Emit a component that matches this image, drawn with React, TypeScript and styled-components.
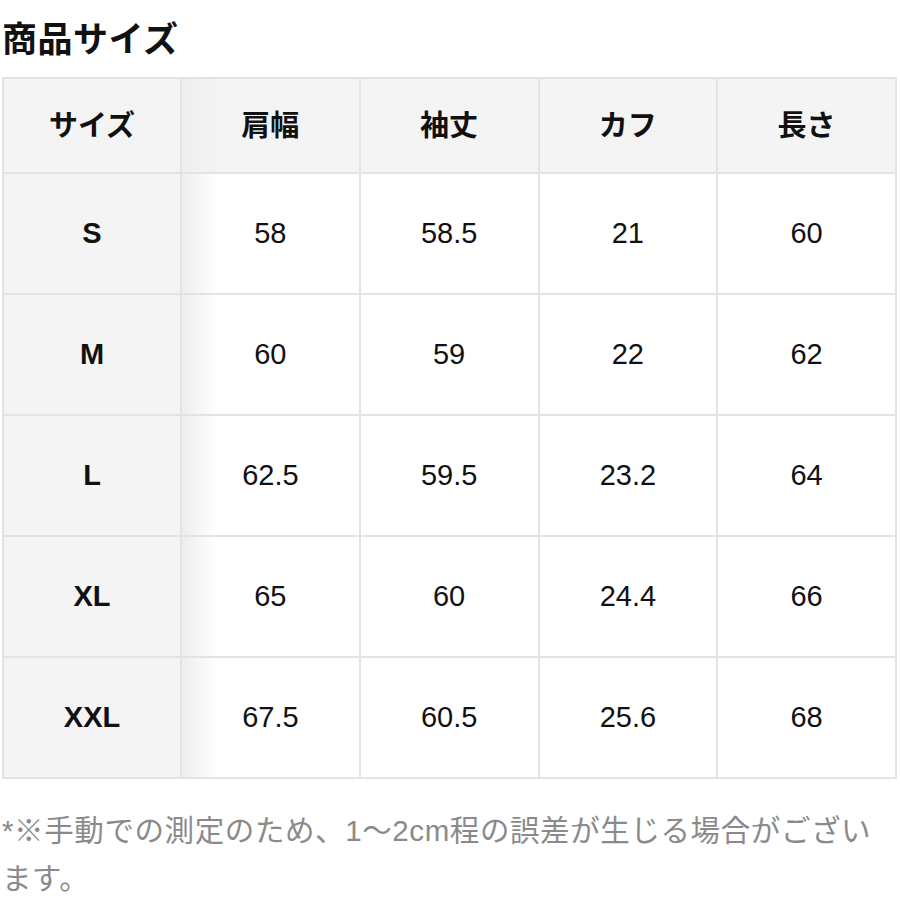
import React from "react";
import styled, { createGlobalStyle } from "styled-components";

const Global = createGlobalStyle`
  html, body { margin: 0; padding: 0; background: #fff; }
  body { font-family: "Liberation Sans", "Noto Sans CJK JP", sans-serif; }
`;

const Page = styled.div`
  width: 900px;
  padding: 0 3px 0 2px;
  box-sizing: border-box;
`;

const Title = styled.h1`
  margin: 0;
  height: 77px;
  display: flex;
  align-items: center;
  padding-bottom: 4px;
  box-sizing: border-box;
  font-family: "Noto Sans CJK JP", sans-serif;
  font-weight: 700;
  font-size: 35px;
  color: #111;
  letter-spacing: 0.5px;
`;

const Table = styled.div`
  display: grid;
  grid-template-columns: 176px repeat(4, 1fr);
  grid-template-rows: 93px repeat(5, 119px);
  gap: 2px;
  padding: 2px;
  background: #e3e3e3;
  width: 895px;
  box-sizing: border-box;
`;

const Cell = styled.div<{ $head?: boolean; $shade?: boolean }>`
  display: flex;
  align-items: center;
  justify-content: center;
  font-size: 29px;
  color: #111;
  font-weight: ${(p) => (p.$head ? 700 : 400)};
  background: ${(p) =>
    p.$shade
      ? `linear-gradient(to right, #eeeeee 0px, ${p.$head ? "#f4f4f4" : "#fff"} 36px)`
      : p.$head
      ? "#f4f4f4"
      : "#fff"};
`;

const HeadText = styled.span`
  font-family: "Noto Sans CJK JP", sans-serif;
  font-weight: 700;
  font-size: 29px;
  margin-top: -5px;
`;

const Note = styled.p`
  margin: 28px 0 0;
  font-family: "Liberation Sans", "Noto Sans CJK JP", sans-serif;
  font-size: 29.5px;
  letter-spacing: 0.6px;
  line-height: 48px;
  color: #8a8a8a;
  width: 885px;
`;

const headers = ["サイズ", "肩幅", "袖丈", "カフ", "長さ"];
const rows: string[][] = [
  ["S", "58", "58.5", "21", "60"],
  ["M", "60", "59", "22", "62"],
  ["L", "62.5", "59.5", "23.2", "64"],
  ["XL", "65", "60", "24.4", "66"],
  ["XXL", "67.5", "60.5", "25.6", "68"],
];

export default function App() {
  return (
    <Page>
      <Global />
      <Title>商品サイズ</Title>
      <Table>
        {headers.map((h, i) => (
          <Cell key={h} $head $shade={i === 1}>
            <HeadText>{h}</HeadText>
          </Cell>
        ))}
        {rows.map((r) =>
          r.map((v, i) => (
            <Cell key={r[0] + i} $head={i === 0} $shade={i === 1}>
              {v}
            </Cell>
          ))
        )}
      </Table>
      <Note>*※手動での測定のため、1〜2cm程の誤差が生じる場合がございます。</Note>
    </Page>
  );
}
